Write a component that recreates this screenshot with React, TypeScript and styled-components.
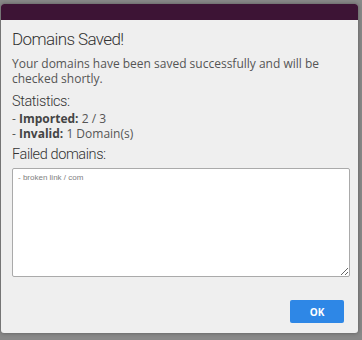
import React from "react";
import styled, { createGlobalStyle } from "styled-components";

const GlobalStyle = createGlobalStyle`
  html, body {
    margin: 0;
    padding: 0;
    background: #898989;
    height: 340px;
    overflow: hidden;
  }
`;

const Overlay = styled.div`
  padding: 4px 5px 0 1px;
`;

const Modal = styled.div`
  width: 357px;
  height: 329px;
  background: #efefef;
  border-radius: 3px;
  box-shadow: 0 0 4px rgba(0, 0, 0, 0.35);
  display: flex;
  flex-direction: column;
  overflow: hidden;
`;

const TopBar = styled.div`
  height: 16px;
  background: #3d1435;
`;

const Body = styled.div`
  flex: 1;
  display: flex;
  flex-direction: column;
  padding: 6px 7px 0 11px;
  font-family: "Open Sans", sans-serif;
  color: #555;
`;

const Title = styled.h1`
  margin: 0 0 4px;
  font-family: Roboto, sans-serif;
  font-weight: 300;
  font-size: 17px;
  letter-spacing: -0.6px;
  line-height: 26px;
  color: #333;
`;

const Text = styled.p`
  margin: 0 0 7px;
  font-size: 12px;
  line-height: 15px;
`;

const SubTitle = styled.h2`
  margin: 0;
  font-family: Roboto, sans-serif;
  font-weight: 300;
  font-size: 14.5px;
  letter-spacing: -0.4px;
  line-height: 18px;
  color: #333;
`;

const Stats = styled.div`
  margin-bottom: 5px;
  font-size: 12px;
  line-height: 15px;
  b {
    color: #444;
  }
`;

const FailedBox = styled.textarea`
  box-sizing: border-box;
  width: 338px;
  height: 109px;
  margin-top: 4px;
  padding: 4px 5px;
  border: 1px solid #aaa;
  border-radius: 2px;
  background: #fff;
  font-family: "Liberation Sans", Arial, sans-serif;
  font-size: 8px;
  color: #808080;
  outline: none;
`;

const Footer = styled.div`
  display: flex;
  justify-content: flex-end;
  padding: 23px 7px 0 0;
`;

const OkButton = styled.button`
  width: 54px;
  height: 23px;
  border: none;
  border-radius: 2px;
  background: #2e87e6;
  color: #fff;
  font-family: "Open Sans", sans-serif;
  font-weight: 700;
  font-size: 10px;
  cursor: pointer;
`;

export default function App() {
  return (
    <>
      <GlobalStyle />
      <Overlay>
        <Modal>
          <TopBar />
          <Body>
            <Title>Domains Saved!</Title>
            <Text>
              Your domains have been saved successfully and will be checked
              shortly.
            </Text>
            <SubTitle>Statistics:</SubTitle>
            <Stats>
              - <b>Imported:</b> 2 / 3
              <br />- <b>Invalid:</b> 1 Domain(s)
            </Stats>
            <SubTitle>Failed domains:</SubTitle>
            <FailedBox readOnly defaultValue="- broken link / com" />
            <Footer>
              <OkButton>OK</OkButton>
            </Footer>
          </Body>
        </Modal>
      </Overlay>
    </>
  );
}
